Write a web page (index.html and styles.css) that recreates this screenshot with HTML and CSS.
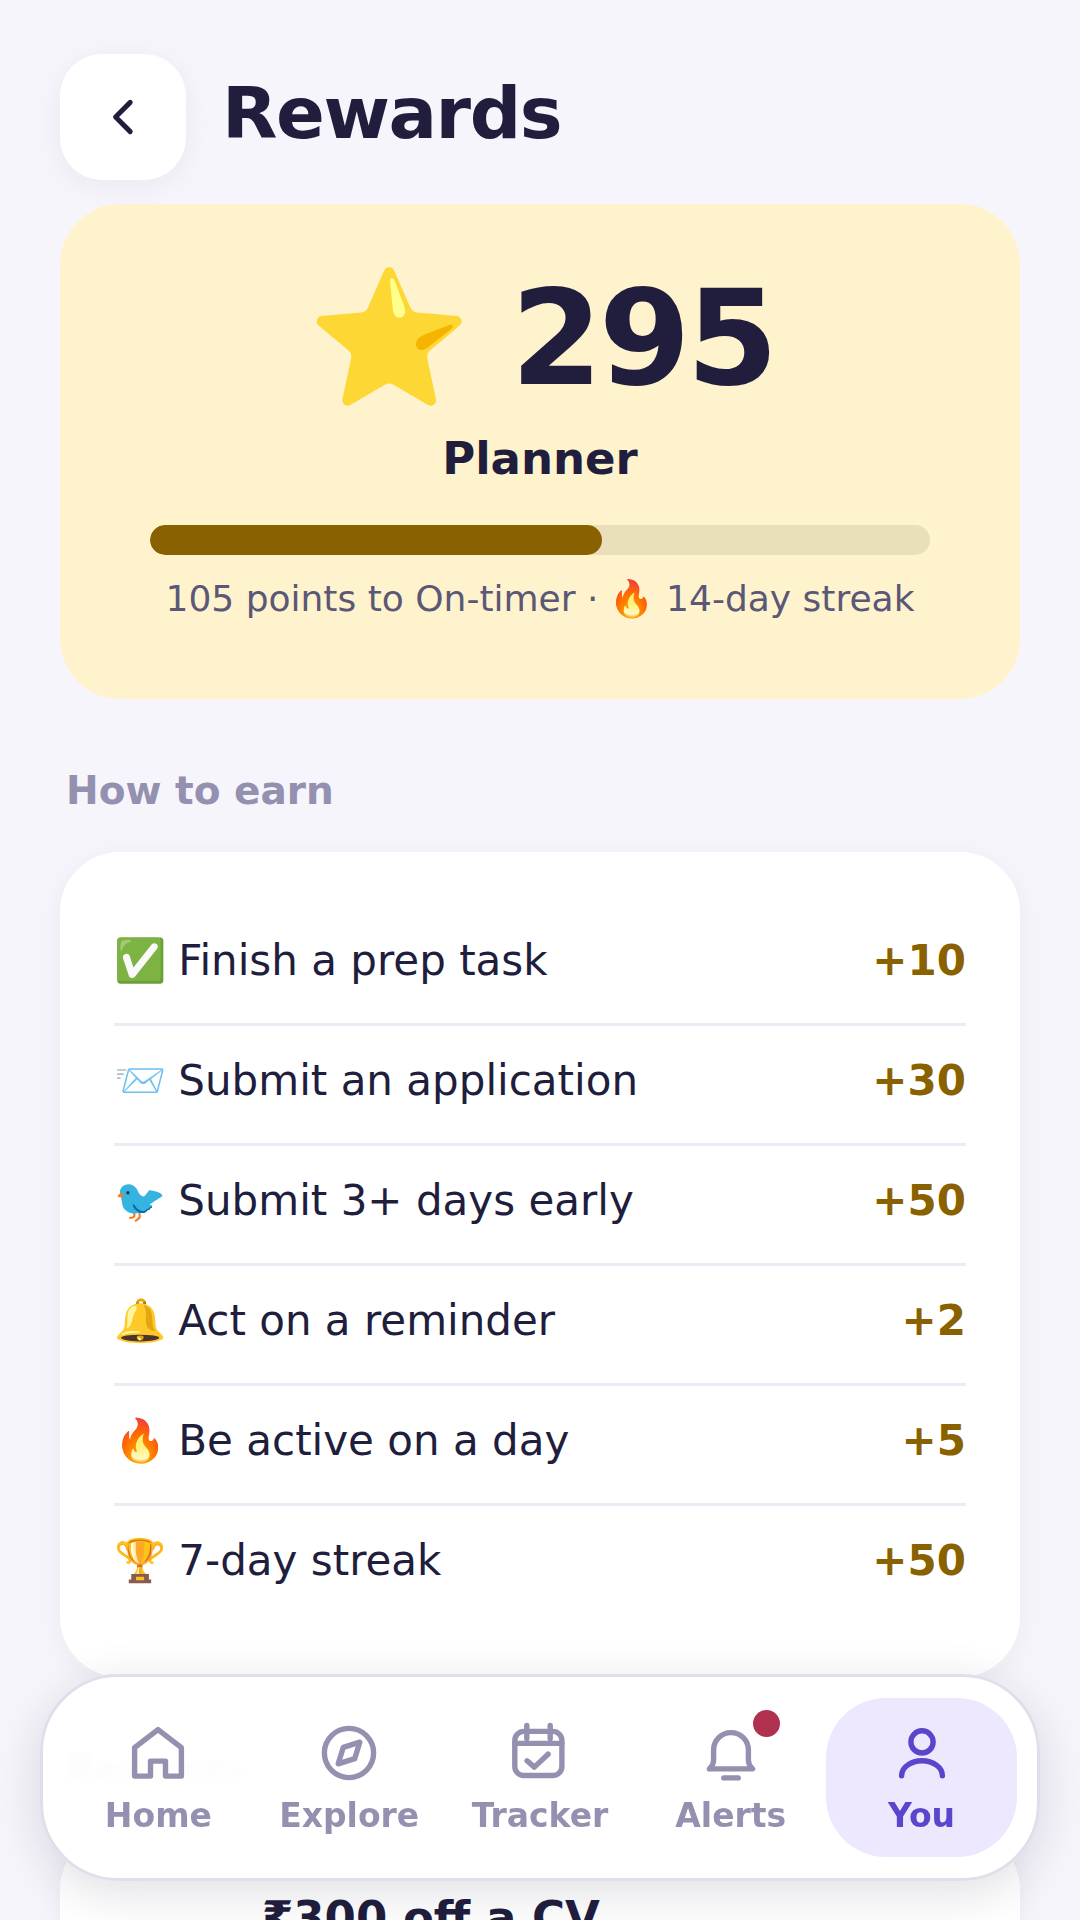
FILE: index.html
```html
<!DOCTYPE html>
<html lang="en">
<head>
<meta charset="utf-8">
<title>Rewards</title>
<link rel="stylesheet" href="styles.css">
</head>
<body>
<main class="page">
  <header class="header">
    <button class="back" aria-label="Back">
      <svg class="back-icon" viewBox="0 0 24 24"><path d="M15.2 5.5 8.7 12l6.5 6.5"/></svg>
    </button>
    <h1 class="title">Rewards</h1>
  </header>

  <section class="hero">
    <div class="score"><span>⭐</span><span class="points">295</span></div>
    <div class="level">Planner</div>
    <div class="track"><div class="fill" style="width:58%"></div></div>
    <div class="hint">105 points to On-timer · 🔥 14-day streak</div>
  </section>

  <h2 class="section-title">How to earn</h2>
  <section class="card earn">
    <div class="row"><span><span class="ico">✅</span>Finish a prep task</span><b class="pts">+10</b></div>
    <div class="row"><span><span class="ico">📨</span>Submit an application</span><b class="pts">+30</b></div>
    <div class="row"><span><span class="ico">🐦</span>Submit 3+ days early</span><b class="pts">+50</b></div>
    <div class="row"><span><span class="ico">🔔</span>Act on a reminder</span><b class="pts">+2</b></div>
    <div class="row"><span><span class="ico">🔥</span>Be active on a day</span><b class="pts">+5</b></div>
    <div class="row"><span><span class="ico">🏆</span>7-day streak</span><b class="pts">+50</b></div>
  </section>

  <h2 class="section-title">Redeem</h2>
  <section class="card reward">
    <div class="reward-title">₹300 off a CV</div>
  </section>
</main>

<nav class="nav">
  <a class="tab">
    <svg class="tab-icon" viewBox="0 0 24 24"><path d="M4.2 10.2 12 4.2l7.8 6v9.5h-5.3v-5h-5v5H4.2z"/></svg>
    <span class="tab-label">Home</span>
  </a>
  <a class="tab">
    <svg class="tab-icon" viewBox="0 0 24 24"><circle cx="12" cy="12" r="8.2"/><path d="M15.6 8.4 13.9 13.9 8.4 15.6 10.1 10.1z"/></svg>
    <span class="tab-label">Explore</span>
  </a>
  <a class="tab">
    <svg class="tab-icon" viewBox="0 0 24 24"><rect x="3.6" y="4.8" width="15.7" height="14.7" rx="3"/><path d="M7.6 2.8v4.4M15.4 2.8v4.4M3.6 8.8h15.7M7.7 14.6l2.4 2.1 4.6-4.3"/></svg>
    <span class="tab-label">Tracker</span>
  </a>
  <a class="tab">
    <span class="bell">
      <svg class="tab-icon" viewBox="0 0 24 24"><path d="M6.2 11a5.8 5.8 0 0 1 11.6 0v3.5c0 1 .6 2 1.4 2.8H4.8c.8-.8 1.4-1.8 1.4-2.8zM9.6 20.3h4.8"/></svg>
      <i class="dot"></i>
    </span>
    <span class="tab-label">Alerts</span>
  </a>
  <a class="tab active">
    <svg class="tab-icon" viewBox="0 0 24 24"><circle cx="12" cy="8.3" r="3.7"/><path d="M5.2 19.6a6.8 5 0 0 1 13.6 0"/></svg>
    <span class="tab-label">You</span>
  </a>
</nav>
</body>
</html>
```

FILE: styles.css
```css
* { box-sizing: border-box; }

html, body {
  margin: 0;
  height: 1920px;
  overflow: hidden;
  background: #f6f5fb;
  color: #201d3d;
  font-family: "DejaVu Sans", "Noto Color Emoji", sans-serif;
}

.page {
  display: flex;
  flex-direction: column;
  padding: 54px 60px 0;
}

.header {
  display: flex;
  align-items: flex-start;
  gap: 36px;
  margin-bottom: 24px;
}

.back {
  width: 126px;
  height: 126px;
  flex: none;
  display: flex;
  align-items: center;
  justify-content: center;
  padding: 0;
  border: 0;
  border-radius: 42px;
  background: #fff;
  box-shadow: 0 6px 30px rgba(32, 29, 61, 0.06);
}

.back-icon {
  width: 54px;
  height: 54px;
  fill: none;
  stroke: #201d3d;
  stroke-width: 2.2;
  stroke-linecap: round;
  stroke-linejoin: round;
}

.title {
  margin: 17px 0 0;
  font-size: 72px;
  line-height: 84px;
  letter-spacing: -1.44px;
  font-weight: 700;
}

.hero {
  display: flex;
  flex-direction: column;
  align-items: center;
  height: 495px;
  padding: 59px 90px 0;
  border-radius: 60px;
  background: #fff3cd;
}

.score {
  display: flex;
  align-items: baseline;
  gap: 39px;
  height: 150px;
  padding-left: 2px;
  font-size: 132px;
  line-height: 150px;
  font-weight: 700;
}

.points {
  letter-spacing: -3.96px;
}

.level {
  margin-top: 19px;
  font-size: 45px;
  line-height: 54px;
  font-weight: 700;
}

.track {
  width: 100%;
  height: 30px;
  margin-top: 39px;
  border-radius: 15px;
  background: #e9dfba;
  overflow: hidden;
}

.fill {
  height: 100%;
  border-radius: 15px;
  background: #8a6100;
}

.hint {
  margin-top: 21px;
  font-size: 36px;
  line-height: 46px;
  color: #5b5877;
  white-space: nowrap;
}

.section-title {
  margin: 69px 0 38px 6px;
  font-size: 39px;
  line-height: 46px;
  font-weight: 700;
  color: #9490b0;
}

.card {
  border-radius: 60px;
  background: #fff;
  box-shadow: 0 6px 30px rgba(32, 29, 61, 0.05);
}

.earn {
  padding: 54px 54px 63px;
}

.row {
  display: flex;
  justify-content: space-between;
  align-items: center;
  height: 120px;
  padding-bottom: 9px;
  font-size: 42px;
  border-bottom: 3px solid #ecebf3;
}

.row:last-child {
  height: 108px;
  padding-bottom: 0;
  border-bottom: 0;
}

.ico {
  margin-right: 12px;
}

.pts {
  font-size: 42px;
  color: #8a6100;
}

.reward {
  padding: 62px 54px;
}

.reward-title {
  margin-left: 148px;
  font-size: 45px;
  line-height: 52px;
  font-weight: 700;
}

.nav {
  position: absolute;
  left: 40px;
  top: 1674px;
  width: 1000px;
  display: flex;
  padding: 21px 20px;
  border: 3px solid #e0deea;
  border-radius: 78px;
  background: rgba(255, 255, 255, 0.975);
  backdrop-filter: blur(3px);
  box-shadow: 0 12px 48px rgba(32, 29, 61, 0.14);
}

.tab {
  flex: 1;
  height: 159px;
  display: flex;
  flex-direction: column;
  align-items: center;
  padding-top: 19px;
  border-radius: 60px;
  color: #9490b0;
}

.tab-label {
  margin-top: 7px;
  font-size: 33px;
  line-height: 40px;
  font-weight: 700;
}

.tab-icon {
  display: block;
  width: 72px;
  height: 72px;
  fill: none;
  stroke: currentColor;
  stroke-width: 1.8;
  stroke-linecap: round;
  stroke-linejoin: round;
}

.bell {
  position: relative;
  display: block;
}

.dot {
  position: absolute;
  top: -7px;
  left: 58px;
  width: 27px;
  height: 27px;
  border-radius: 50%;
  background: #b03050;
}

.active {
  background: #ede8fd;
  color: #5a45cc;
}
```
